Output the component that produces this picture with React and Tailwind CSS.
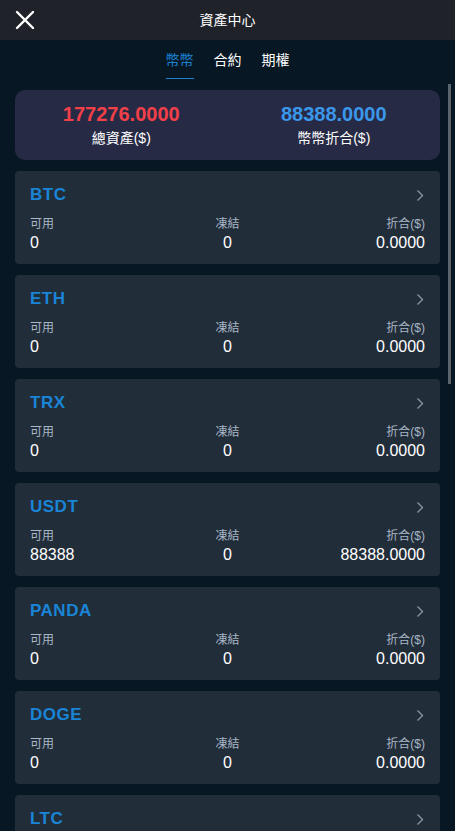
import React, { useState } from "react";

const coins = [
  { name: "BTC", usable: "0", frozen: "0", value: "0.0000" },
  { name: "ETH", usable: "0", frozen: "0", value: "0.0000" },
  { name: "TRX", usable: "0", frozen: "0", value: "0.0000" },
  { name: "USDT", usable: "88388", frozen: "0", value: "88388.0000" },
  { name: "PANDA", usable: "0", frozen: "0", value: "0.0000" },
  { name: "DOGE", usable: "0", frozen: "0", value: "0.0000" },
  { name: "LTC", usable: "0", frozen: "0", value: "0.0000" },
];

const tabs = ["幣幣", "合約", "期權"];

function CoinCard({ coin }) {
  return (
    <div className="bg-[#212d39] rounded-[4px] px-[15px] pt-[12px] pb-[11px]">
      <div className="flex items-center justify-between h-[24px]">
        <span className="text-[17px] font-bold text-[#1a84d6] tracking-[0.5px]">{coin.name}</span>
        <svg width="8" height="13" viewBox="0 0 8 13" className="mr-[1px]">
          <path d="M1.5 1.5 L6.5 6.5 L1.5 11.5" fill="none" stroke="#8a939c" strokeWidth="1.4" />
        </svg>
      </div>
      <div className="grid grid-cols-3 mt-[9px] text-[12px] leading-[16px] text-[#a8b6c6]">
        <span>可用</span>
        <span className="text-center">凍結</span>
        <span className="text-right">折合($)</span>
      </div>
      <div className="grid grid-cols-3 mt-[1px] text-[16px] leading-[20px] text-white">
        <span>{coin.usable}</span>
        <span className="text-center">{coin.frozen}</span>
        <span className="text-right">{coin.value}</span>
      </div>
    </div>
  );
}

function App() {
  const [active, setActive] = useState(0);

  return (
    <div
      className="h-[831px] overflow-hidden bg-[#081724] flex flex-col"
      style={{ fontFamily: '"Liberation Sans", Arial, "Noto Sans CJK TC", sans-serif' }}
    >
      <div className="h-[40px] shrink-0 bg-[#202229] relative flex items-center justify-center">
        <button className="absolute left-[15px] top-[10px]">
          <svg width="20" height="20" viewBox="0 0 20 20">
            <path d="M2 2 L18 18 M18 2 L2 18" stroke="#ffffff" strokeWidth="2.4" strokeLinecap="round" />
          </svg>
        </button>
        <span className="text-white text-[14px]">資產中心</span>
      </div>

      <div className="h-[44px] shrink-0 flex justify-center gap-[20px] pt-[10px]">
        {tabs.map((t, i) => (
          <button
            key={t}
            onClick={() => setActive(i)}
            className={`h-[30px] text-[14px] leading-[20px] flex flex-col items-center ${
              i === active ? "text-[#1b82d2]" : "text-white"
            }`}
          >
            <span>{t}</span>
            {i === active && <span className="mt-[8px] h-[1px] w-full bg-[#1b82d2]" />}
          </button>
        ))}
      </div>

      <div className="relative flex-1 overflow-hidden">
        <div className="absolute right-[4px] top-0 w-[3px] h-[300px] bg-[#5a646d]" />
        <div className="px-[15px] pt-[6px] flex flex-col gap-[11px]">
          <div className="bg-[#272a45] rounded-[10px] h-[70px] grid grid-cols-2 items-center">
            <div className="flex flex-col items-center">
              <span className="text-[20px] leading-[24px] font-bold text-[#f24049]">177276.0000</span>
              <span className="text-[14px] leading-[20px] text-white mt-[2px]">總資產($)</span>
            </div>
            <div className="flex flex-col items-center">
              <span className="text-[20px] leading-[24px] font-bold text-[#3a97ea]">88388.0000</span>
              <span className="text-[14px] leading-[20px] text-white mt-[2px]">幣幣折合($)</span>
            </div>
          </div>
          {coins.map((c) => (
            <CoinCard key={c.name} coin={c} />
          ))}
        </div>
      </div>
    </div>
  );
}

export default App;
